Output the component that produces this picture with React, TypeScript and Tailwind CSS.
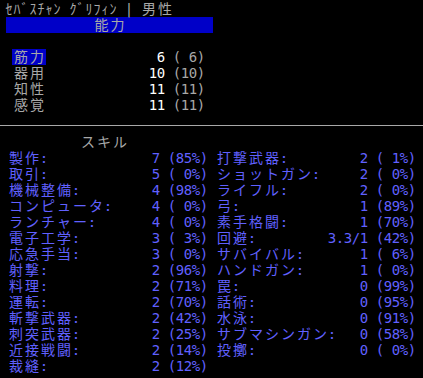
import React from "react";

// terminal-style character status screen: every glyph sits in an 8px (half) or 16px (full) cell

function isWide(ch: string) {
  const c = ch.codePointAt(0) ?? 0;
  if (c < 0x1100) return false;
  if (c >= 0xff61 && c <= 0xff9f) return false;
  return true;
}

function Cells({ text, className = "" }: { text: string; className?: string }) {
  return (
    <span className={`inline-flex ${className}`}>
      {Array.from(text).map((ch, i) => (
        <span
          key={i}
          className={
            isWide(ch)
              ? "w-4 shrink-0 flex justify-center whitespace-pre"
              : "w-2 shrink-0 flex justify-center whitespace-pre"
          }
        >
          {ch}
        </span>
      ))}
    </span>
  );
}

const stats = [
  { name: "筋力", val: 6, base: 6 },
  { name: "器用", val: 10, base: 10 },
  { name: "知性", val: 11, base: 11 },
  { name: "感覚", val: 11, base: 11 },
];

type Skill = [string, string, number];

const leftSkills: Skill[] = [
  ["製作", "7", 85],
  ["取引", "5", 0],
  ["機械整備", "4", 98],
  ["コンピュータ", "4", 0],
  ["ランチャー", "4", 0],
  ["電子工学", "3", 3],
  ["応急手当", "3", 0],
  ["射撃", "2", 96],
  ["料理", "2", 71],
  ["運転", "2", 70],
  ["斬撃武器", "2", 42],
  ["刺突武器", "2", 25],
  ["近接戦闘", "2", 14],
  ["裁縫", "2", 12],
];

const rightSkills: Skill[] = [
  ["打撃武器", "2", 1],
  ["ショットガン", "2", 0],
  ["ライフル", "2", 0],
  ["弓", "1", 89],
  ["素手格闘", "1", 70],
  ["回避", "3.3/1", 42],
  ["サバイバル", "1", 6],
  ["ハンドガン", "1", 0],
  ["罠", "0", 99],
  ["話術", "0", 95],
  ["水泳", "0", 91],
  ["サブマシンガン", "0", 58],
  ["投擲", "0", 0],
];

function SkillCell({ skill }: { skill?: Skill }) {
  if (!skill) return <div className="w-[200px]" />;
  const [name, lvl, pct] = skill;
  return (
    <div className="flex w-[200px]">
      <div className="flex w-[152px] justify-between">
        <Cells text={name + ":"} />
        <Cells text={lvl} />
      </div>
      <Cells text={" (" + String(pct).padStart(2, " ") + "%)"} />
    </div>
  );
}

export default function App() {
  return (
    <div className="w-[423px] h-[378px] overflow-hidden bg-black pt-px font-['DejaVu_Sans_Mono','Noto_Sans_CJK_JP',monospace] text-[14px] leading-4">
      <div className="flex h-4 pl-[5px] text-[#a8a8a8]">
        <Cells text="ｾﾊﾞｽﾁｬﾝ ｸﾞﾘﾌｨﾝ | 男性" />
      </div>
      <div className="ml-[6px] flex h-4 w-[207px] justify-center bg-[#0000c8] text-[#a8a8a8]">
        <Cells text="能力" />
      </div>
      <div className="h-4" />

      {stats.map((s, i) => (
        <div key={s.name} className="flex h-4 pl-[12px]">
          <span className={i === 0 ? "flex w-[34px] bg-[#0000c8] px-px text-[#a8a8a8]" : "flex w-[34px] px-px text-[#a8a8a8]"}>
            <Cells text={s.name} />
          </span>
          <span className="flex w-[119px] justify-end text-white">
            <Cells text={String(s.val)} />
          </span>
          <Cells className="text-[#a8a8a8]" text={" (" + String(s.base).padStart(2, " ") + ")"} />
        </div>
      ))}

      <div className="mt-3 h-px bg-[#a8a8a8]" />

      <div className="pt-2">
        <div className="flex h-4 pl-[80px] text-[#a8a8a8]">
          <Cells text="スキル" />
        </div>
        {leftSkills.map((sk, i) => (
          <div key={sk[0]} className="flex h-4 gap-2 pl-2 text-[#6060ff]">
            <SkillCell skill={sk} />
            <SkillCell skill={rightSkills[i]} />
          </div>
        ))}
      </div>
    </div>
  );
}
